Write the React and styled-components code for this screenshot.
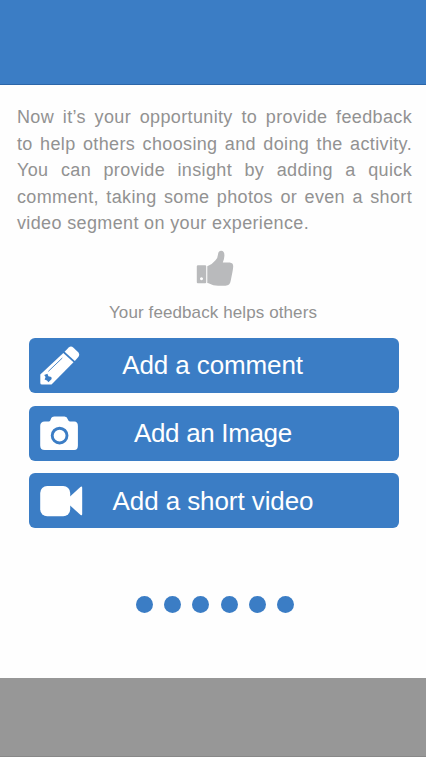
import React from "react";
import styled, { createGlobalStyle } from "styled-components";

const BLUE = "#3b7dc5";

const GlobalStyle = createGlobalStyle`
  body {
    margin: 0;
    background: #fefefe;
    font-family: "Liberation Sans", Arial, sans-serif;
  }
`;

const Screen = styled.div`
  display: flex;
  flex-direction: column;
  width: 426px;
  height: 757px;
  background: #fefefe;
  overflow: hidden;
`;

const TopBar = styled.header`
  flex: none;
  box-sizing: border-box;
  height: 85px;
  background: ${BLUE};
  border-bottom: 1px solid #2c66a8;
`;

const Content = styled.main`
  flex: 1;
  display: flex;
  flex-direction: column;
  align-items: center;
`;

const Intro = styled.p`
  width: 395px;
  margin: 19px 0 0 3px;
  color: #929292;
  font-size: 18px;
  line-height: 26.6px;
  text-align: justify;
  letter-spacing: 0.36px;
`;

const Line = styled.span`
  display: block;
  white-space: nowrap;
  text-align-last: ${({ $last }) => ($last ? "left" : "justify")};
`;

const ThumbIcon = styled.svg`
  flex: none;
  width: 38px;
  height: 37px;
  margin-top: 13px;
  margin-left: 3px;
`;

const Caption = styled.p`
  margin: 16px 0 0;
  color: #929292;
  font-size: 17px;
  line-height: 20px;
  letter-spacing: 0.1px;
`;

const Actions = styled.div`
  display: flex;
  flex-direction: column;
  gap: 12.7px;
  width: 370px;
  margin: 15px 0 0 2px;
`;

const ActionButton = styled.button`
  display: flex;
  align-items: center;
  box-sizing: border-box;
  width: 370px;
  height: 55px;
  padding: 0 0 0 10px;
  border: 0;
  border-radius: 6px;
  background: ${BLUE};
  color: #fff;
  font-family: inherit;
`;

const ActionIcon = styled.svg`
  flex: none;
  width: 46px;
  height: 44px;
`;

const Label = styled.span`
  margin-left: ${({ $offset }) => $offset}px;
  font-size: 26px;
  line-height: 30px;
  letter-spacing: ${({ $spacing }) => $spacing};
  white-space: nowrap;
`;

const Dots = styled.div`
  display: flex;
  gap: 11.4px;
  margin: 67.3px 0 0 4px;
`;

const Dot = styled.span`
  width: 17px;
  height: 17px;
  border-radius: 50%;
  background: ${BLUE};
`;

const BottomBar = styled.footer`
  flex: none;
  box-sizing: border-box;
  height: 79px;
  background: #979797;
  border-bottom: 1px solid #888;
`;

const introLines = [
  { text: "Now it’s your opportunity to provide feedback" },
  { text: "to help others choosing and doing the activity." },
  { text: "You can provide insight by adding a quick" },
  { text: "comment, taking some photos or even a short" },
  { text: "video segment on your experience.", last: true },
];

const Pencil = () => (
  <ActionIcon viewBox="0 0 46 44" fill="#fff">
    <path d="M1.3 31.5 L24.3 10 L34.5 19.3 L12.5 41.5 H3 Q1.3 41.5 1.3 40Z" />
    <path d="M25.6 8.7 L29.7 4.5 Q32 2.6 34.5 4.7 L39.2 9.3 Q41.2 11.6 39.3 14 L35.8 17.9Z" />
    <path d="M9.3 28.4 L23.3 15" stroke={BLUE} strokeWidth="0.9" />
    <path d="M5.2 32 L8.4 30.8 L9.4 33.2 L12.3 34 L12.7 36 L9.4 39.2 L8 37.6 L5.6 36.6 L6.6 34Z" fill={BLUE} />
  </ActionIcon>
);

const Camera = () => (
  <ActionIcon viewBox="0 0 46 44" fill="#fff">
    <path d="M5.8 10.5 H10 Q11.2 10.3 11.6 8.7 Q12.4 5.5 15.4 5.5 H25.5 Q28 5.5 28.9 8.4 Q29.5 10.5 31 10.5 H35.3 Q38.9 10.5 38.9 15.1 V34.5 Q38.9 39 35.3 39 H5.8 Q1.2 39 1.2 34.5 V15.1 Q1.2 10.5 5.8 10.5Z" />
    <circle cx="20.6" cy="24.6" r="7.4" fill="none" stroke={BLUE} strokeWidth="2.9" />
  </ActionIcon>
);

const Video = () => (
  <ActionIcon viewBox="0 0 46 44" fill="#fff">
    <rect x="1.2" y="7" width="30" height="30.2" rx="7" />
    <path d="M30.5 18 L41.4 7.9 Q43.2 7 43.2 8.9 V35 Q43.2 37 41.6 35.9 L30.5 26Z" />
  </ActionIcon>
);

const actions = [
  { label: "Add a comment", Icon: Pencil, offset: 37.3, spacing: "-0.12px" },
  { label: "Add an Image", Icon: Camera, offset: 49, spacing: "-0.34px" },
  { label: "Add a short video", Icon: Video, offset: 27.5, spacing: "-0.08px" },
];

export default function App() {
  return (
    <>
      <GlobalStyle />
      <Screen>
        <TopBar />
        <Content>
          <Intro>
            {introLines.map(({ text, last }) => (
              <Line key={text} $last={last}>
                {text}
              </Line>
            ))}
          </Intro>
          <ThumbIcon viewBox="0 0 38 37" fill="#b9babc">
            <path
              fillRule="evenodd"
              d="M2 15.2 H9.2 Q10.2 15.2 10.2 16.2 V32.2 Q10.2 33.2 9.2 33.2 H1.8 Q.8 33.2 .8 32.2 V16.2 Q.8 15.2 2 15.2Z M5.5 27.2 a1.5 1.5 0 1 0 .01 0Z"
            />
            <path d="M11.3 16.3 Q16.4 14.3 19.5 10.3 Q21.8 7.7 22 4.4 Q22.3 .8 25.2 .8 Q28.6 .9 28.4 5.8 Q28.3 9 26.8 12.6 H33.7 Q37.3 13 37.2 16.5 Q37 19.1 36.6 21.2 L34.6 31.3 Q34 35.5 29.5 35.8 H22 Q17 35.8 13.7 33.7 Q12.8 33.1 11.3 33Z" />
          </ThumbIcon>
          <Caption>Your feedback helps others</Caption>
          <Actions>
            {actions.map(({ label, Icon, offset, spacing }) => (
              <ActionButton key={label} type="button">
                <Icon />
                <Label $offset={offset} $spacing={spacing}>
                  {label}
                </Label>
              </ActionButton>
            ))}
          </Actions>
          <Dots>
            {[1, 2, 3, 4, 5, 6].map((step) => (
              <Dot key={step} />
            ))}
          </Dots>
        </Content>
        <BottomBar />
      </Screen>
    </>
  );
}
